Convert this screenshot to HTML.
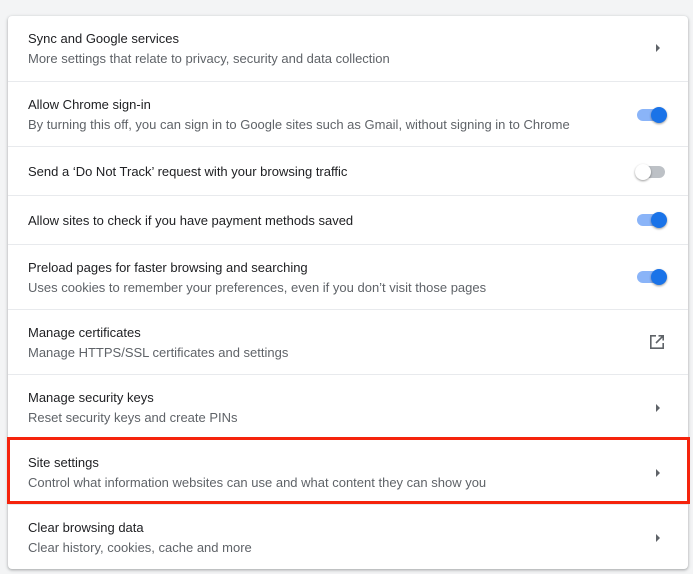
<!DOCTYPE html><html><head><style>
body{margin:0;width:693px;height:574px;background:#f3f4f5;font-family:"Liberation Sans",Arial,sans-serif;position:relative;overflow:hidden}
.card{position:absolute;left:8px;top:16px;width:680px;height:553px;background:#fff;border-radius:4px;box-shadow:0 1px 2px rgba(60,64,67,.3),0 1px 3px 1px rgba(60,64,67,.12)}
.row{position:absolute;left:0;width:680px;border-top:1px solid #e8eaed;box-sizing:border-box}
.row:first-child{border-top:none}
.t{position:absolute;left:20px;font-size:13px;color:#202124}
.s{position:absolute;left:20px;font-size:13px;color:#5f6368}
.arr{position:absolute;left:648px;width:0;height:0;border-left:4px solid #5f6368;border-top:4px solid transparent;border-bottom:4px solid transparent}
.tg{position:absolute;left:629px;width:28px;height:12px;border-radius:6px;background:#8ab4f8}
.tg i{position:absolute;left:14px;top:-2px;width:16px;height:16px;border-radius:50%;background:#1a73e8;box-shadow:0 1px 2px rgba(0,0,0,.4)}
.tg.off{background:#bdc1c6}.tg.off i{left:-2px;background:#fff}
.red{position:absolute;left:7px;top:437px;width:677px;height:61px;border:3px solid #f5230c}
</style></head><body>
<div class="card">
<div class="row" style="top:0;height:65px"><div class="t" style="top:15px">Sync and Google services</div><div class="s" style="top:35px">More settings that relate to privacy, security and data collection</div><div class="arr" style="top:28px"></div></div>
<div class="row" style="top:65px;height:65px"><div class="t" style="top:15px">Allow Chrome sign-in</div><div class="s" style="top:35px">By turning this off, you can sign in to Google sites such as Gmail, without signing in to Chrome</div><div class="tg" style="top:27px"><i></i></div></div>
<div class="row" style="top:130px;height:49px"><div class="t" style="top:17px">Send a ‘Do Not Track’ request with your browsing traffic</div><div class="tg off" style="top:19px"><i></i></div></div>
<div class="row" style="top:179px;height:49px"><div class="t" style="top:17px">Allow sites to check if you have payment methods saved</div><div class="tg" style="top:18px"><i></i></div></div>
<div class="row" style="top:228px;height:65px"><div class="t" style="top:15px">Preload pages for faster browsing and searching</div><div class="s" style="top:35px">Uses cookies to remember your preferences, even if you don’t visit those pages</div><div class="tg" style="top:26px"><i></i></div></div>
<div class="row" style="top:293px;height:65px"><div class="t" style="top:15px">Manage certificates</div><div class="s" style="top:35px">Manage HTTPS/SSL certificates and settings</div>
<svg style="position:absolute;left:641px;top:24px" width="16" height="16" viewBox="0 0 16 16" fill="none" stroke="#5f6368" stroke-width="1.6"><path d="M7 1.8H1.8v12.4h12.4V9"/><path d="M9.5 1.8h4.7v4.7M14.2 1.8L7 9"/></svg></div>
<div class="row" style="top:358px;height:65px"><div class="t" style="top:15px">Manage security keys</div><div class="s" style="top:35px">Reset security keys and create PINs</div><div class="arr" style="top:29px"></div></div>
<div class="row" style="top:423px;height:65px"><div class="t" style="top:15px">Site settings</div><div class="s" style="top:35px">Control what information websites can use and what content they can show you</div><div class="arr" style="top:29px"></div></div>
<div class="row" style="top:488px;height:65px"><div class="t" style="top:15px">Clear browsing data</div><div class="s" style="top:35px">Clear history, cookies, cache and more</div><div class="arr" style="top:29px"></div></div>
</div>
<div class="red"></div>
</body></html>
